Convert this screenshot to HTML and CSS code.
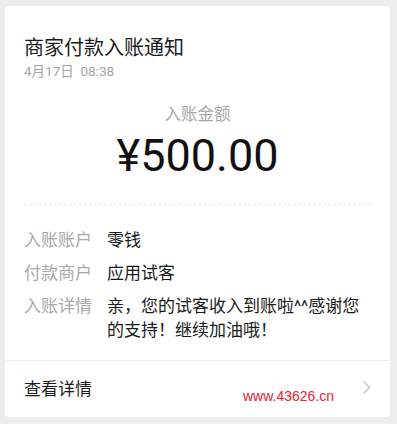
FILE: index.html
```html
<!DOCTYPE html>
<html lang="zh">
<head>
<meta charset="utf-8">
<link rel="stylesheet" href="styles.css">
</head>
<body>
<div class="card">
  <div class="head">
    <div class="title">商家付款入账通知</div>
    <div class="date">4月17日&nbsp; 08:38</div>
  </div>
  <div class="amount-box">
    <div class="amount-label">入账金额</div>
    <div class="amount">¥500.00</div>
  </div>
  <div class="dash"></div>
  <div class="rows">
    <div class="row"><div class="label">入账账户</div><div class="value">零钱</div></div>
    <div class="row"><div class="label">付款商户</div><div class="value">应用试客</div></div>
    <div class="row"><div class="label">入账详情</div><div class="value">亲，您的试客收入到账啦^^感谢您的支持！继续加油哦！</div></div>
  </div>
  <div class="footer">
    <div class="more">查看详情</div>
    <span class="mark">www.43626.cn</span>
    <svg class="chev" width="9" height="15" viewBox="0 0 9 15"><path d="M1.5 1.5 L7.5 7.5 L1.5 13.5" fill="none" stroke="#c8c8c8" stroke-width="1.6"/></svg>
  </div>
</div>
</body>
</html>
```
FILE: styles.css
```css
html, body {
  margin: 0;
  padding: 0;
  background: #ededed;
  width: 397px;
  height: 424px;
  overflow: hidden;
}
body {
  font-family: Roboto, "Noto Sans CJK SC", sans-serif;
  padding-top: 6px;
  padding-left: 5px;
}
.card {
  width: 385px;
  height: 411px;
  background: #fff;
  border-radius: 4px;
  box-sizing: border-box;
  display: flex;
  flex-direction: column;
}
.head {
  padding: 28px 19px 0;
}
.title {
  font-size: 20px;
  line-height: 28px;
  color: #1b1b1b;
}
.date {
  font-size: 13.5px;
  line-height: 18px;
  color: #a5a5a5;
}
.amount-box {
  text-align: center;
  padding-top: 23px;
}
.amount-label {
  font-size: 16.5px;
  line-height: 24px;
  color: #a8a8a8;
}
.amount {
  font-size: 45px;
  line-height: 52px;
  color: #111;
  margin-top: 3px;
}
.dash {
  margin: 22px 19px 0;
  border-top: 1px dashed #ececec;
}
.rows {
  padding: 23px 19px 0;
  display: flex;
  flex-direction: column;
  gap: 9px;
}
.row {
  display: flex;
  font-size: 17px;
  line-height: 24px;
}
.label {
  color: #a8a8a8;
  width: 83px;
  flex: none;
}
.value {
  color: #1b1b1b;
  width: 266px;
}
.footer {
  margin-top: auto;
  border-top: 1px solid #f0f0f0;
  height: 57px;
  display: flex;
  align-items: center;
  padding: 0 19px 3px;
  position: relative;
  box-sizing: border-box;
}
.more {
  font-size: 17px;
  color: #1b1b1b;
  flex: 1;
}
.mark {
  position: absolute;
  left: 238px;
  top: 27px;
  font-family: "Liberation Sans", Arial, sans-serif;
  font-size: 14px;
  color: #e8202e;
}
```
